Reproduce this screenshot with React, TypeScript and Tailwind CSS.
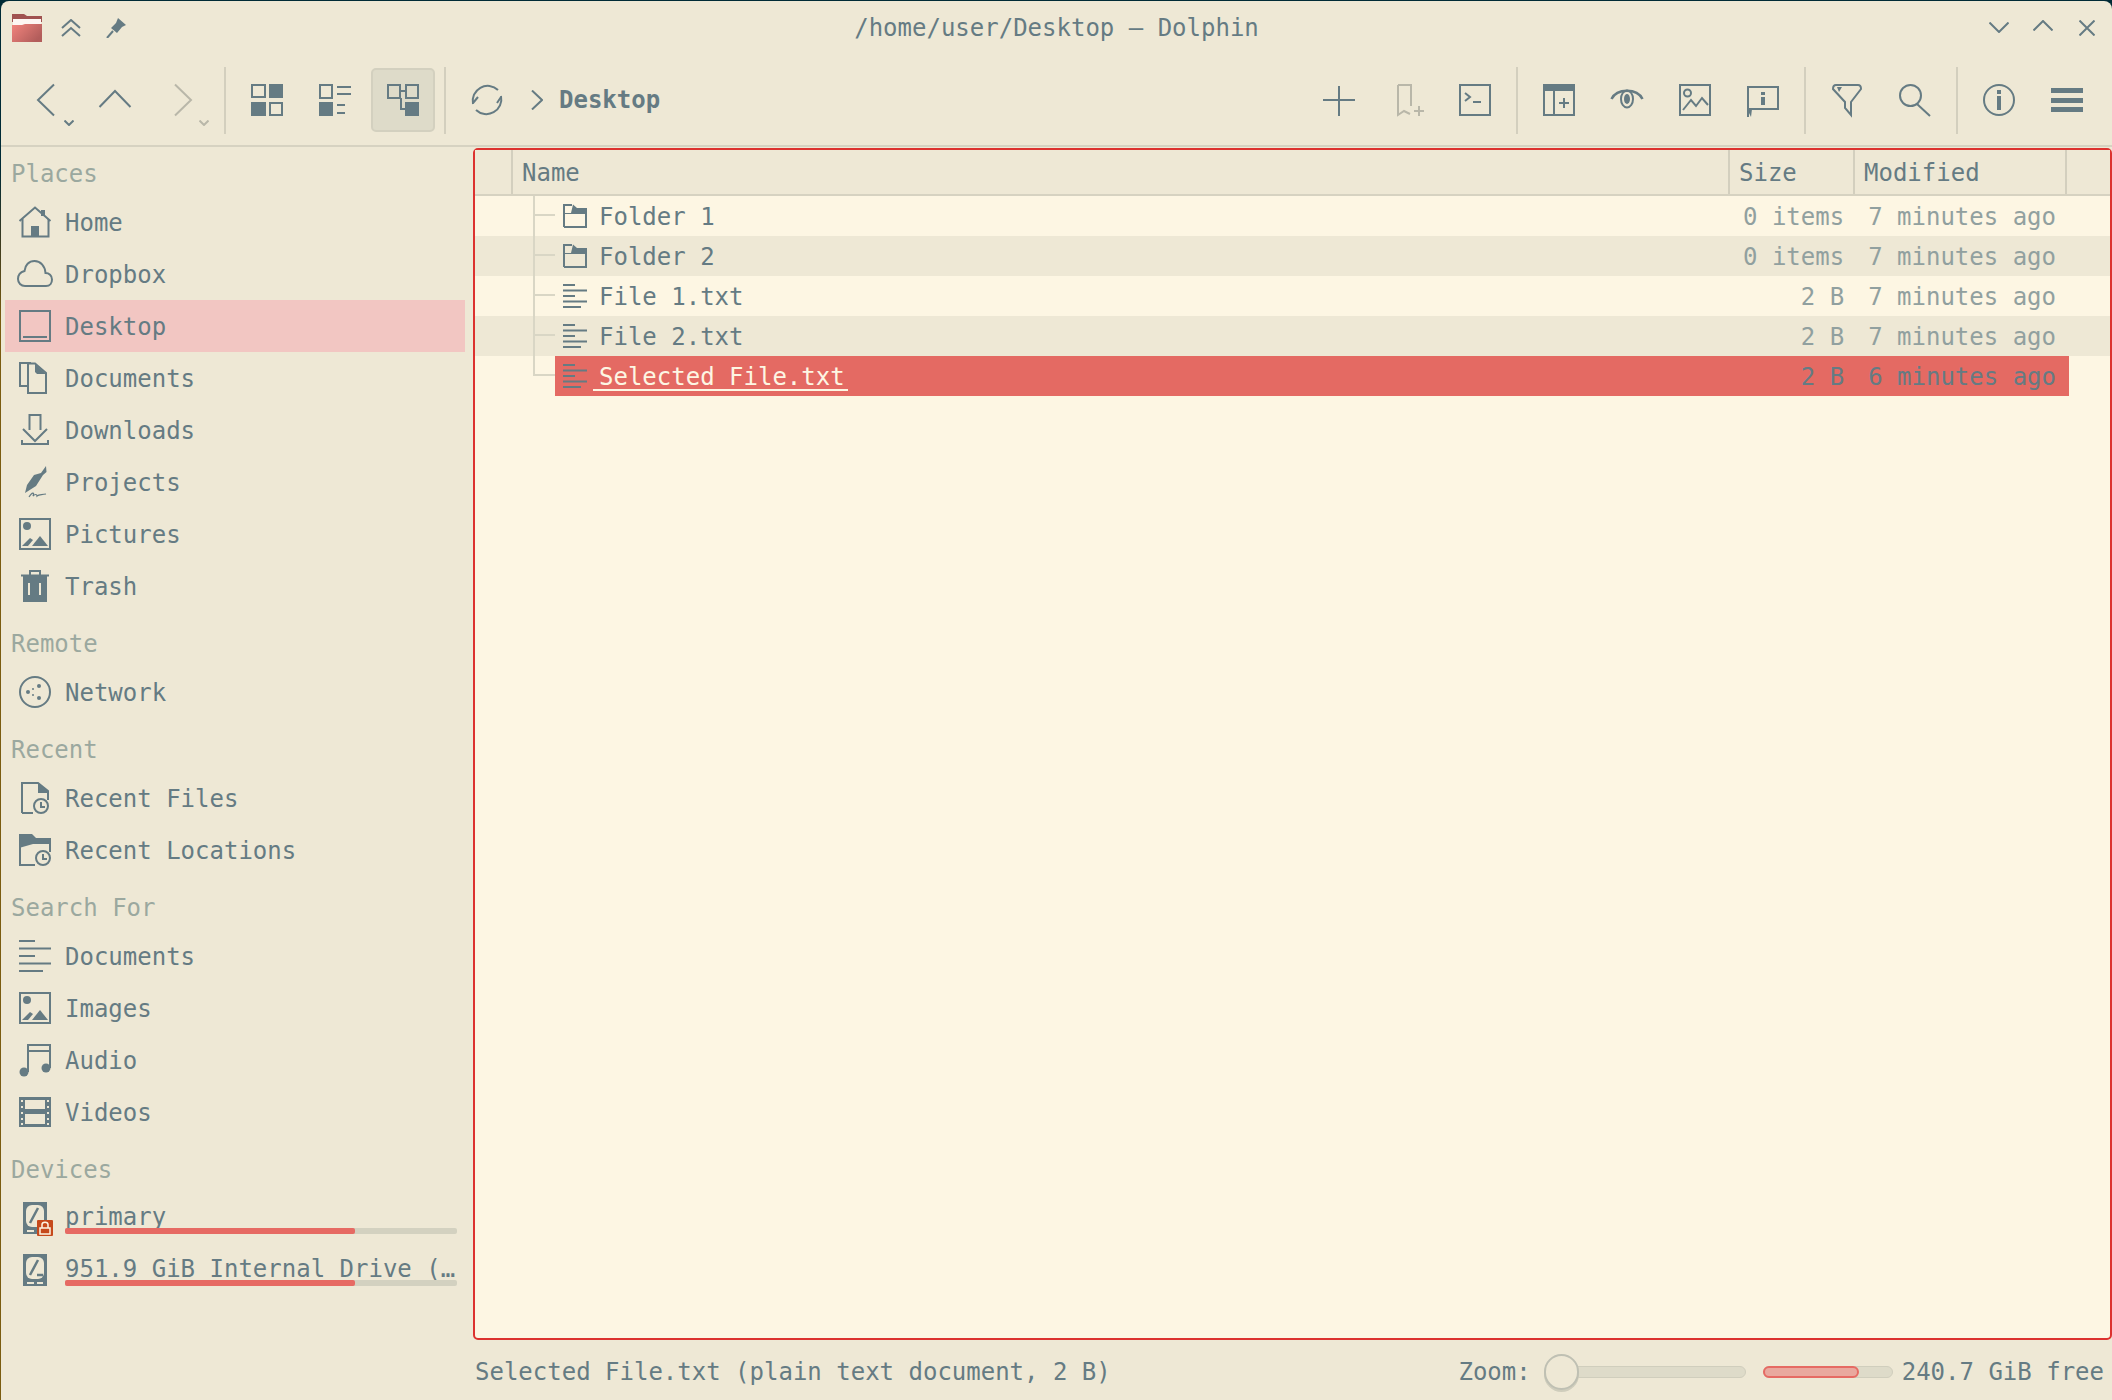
import type { ReactNode } from "react";

const INK = "#657b83";
const DIM = "#b9b7a9";
const BG = "#eee8d5";

function Ic({ size = 32, color = INK, sw = 2, children }: { size?: number; color?: string; sw?: number; children: ReactNode }) {
  return (
    <svg width={size} height={size} viewBox={`0 0 ${size} ${size}`} fill="none" stroke={color} strokeWidth={sw} className="shrink-0 overflow-visible">
      {children}
    </svg>
  );
}

const Fill = { fill: INK, stroke: "none" };

const Home = () => (
  <Ic>
    <path d="M0.5 15 L16 1.5 L31.5 15" />
    <path d="M3.5 13 V30.5 H29.5 V13" />
    <rect x="22" y="4" width="4" height="6" {...Fill} />
    <rect x="12" y="20" width="8" height="11" {...Fill} />
  </Ic>
);
const Cloud = () => (
  <Ic>
    <path d="M6 28 H27 C31 28 33 25 33 21.5 C33 17.5 30 15 26.5 15 C26 8 21.5 3 15.5 3 C10 3 6 7 5.5 13 C2 14 -1 17 -1 21 C-1 25 2 28 6 28 Z" />
  </Ic>
);
const DesktopIc = () => (
  <Ic>
    <rect x="1" y="1" width="30" height="30" />
    <path d="M4 27 H28" />
  </Ic>
);
const Docs = () => (
  <Ic>
    <path d="M8 24 H1 V1 H12" />
    <path d="M9 1.5 H16 L27 11 V31 H9 Z" />
    <path d="M16 2 L27 12 H18 L16 10 Z" {...Fill} />
  </Ic>
);
const Download = () => (
  <Ic>
    <path d="M10.5 16 V1 H21.5 V16" />
    <path d="M4 15 L16 27 L28 15" />
    <path d="M3 26 V30 H29 V26" />
  </Ic>
);
const Pen = () => (
  <Ic>
    <path d="M27 0 L27.5 6 L24 9 L17 20 L6 27 L8 19 L15 9 L22 7 Z" {...Fill} />
    <path d="M10 31 C13 26 16 26 14 30 C16 28 18 28 18 30 C20 28 22 29 27 28" strokeWidth="1.2" />
  </Ic>
);
const Picture = () => (
  <Ic>
    <rect x="1" y="1" width="30" height="30" />
    <circle cx="8" cy="8" r="4" {...Fill} />
    <path d="M21 18 L29 28 H13 Z" {...Fill} />
    <path d="M3 28 L11 20 L14 22 L9 28 Z" {...Fill} />
  </Ic>
);
const Trash = () => (
  <Ic>
    <path d="M2 5.5 H30" />
    <path d="M11 5 V1 H21 V5" />
    <rect x="4" y="6" width="24" height="26" {...Fill} />
    <rect x="9" y="13" width="2" height="12" fill={BG} stroke="none" />
    <rect x="20" y="13" width="2" height="12" fill={BG} stroke="none" />
  </Ic>
);
const Net = () => (
  <Ic>
    <circle cx="16" cy="16" r="15" />
    <circle cx="9" cy="16" r="2" {...Fill} />
    <circle cx="20" cy="10" r="2" {...Fill} />
    <circle cx="20" cy="22" r="2" {...Fill} />
    <circle cx="14" cy="13" r="1" {...Fill} />
    <circle cx="14" cy="19" r="1" {...Fill} />
  </Ic>
);
const Clock = ({ x, y }: { x: number; y: number }) => (
  <g>
    <circle cx={x} cy={y} r="7" fill={BG} />
    <path d={`M${x} ${y - 4} V${y + 1} H${x + 4}`} />
  </g>
);
const RecentFile = () => (
  <Ic>
    <path d="M3 31 V1 H19 L29 9 V18" />
    <path d="M3 31 H14" />
    <path d="M19 1 L29 9 V11 H19 Z" {...Fill} />
    <Clock x={22} y={24} />
  </Ic>
);
const RecentLoc = () => (
  <Ic>
    <path d="M0 0 H13 L17 4 H32 V10 H14 L0 14 Z" {...Fill} />
    <path d="M1 12 V31 H16" />
    <path d="M31 10 V18" />
    <Clock x={24} y={24} />
  </Ic>
);
const Lines = () => (
  <Ic>
    <path d="M0 1 H16 M0 8.5 H32 M0 16 H16 M0 23.5 H32 M0 31 H24" />
  </Ic>
);
const Music = () => (
  <Ic>
    <path d="M9 28 V1 H31 V24 M9 7 H31" />
    <circle cx="5" cy="28" r="4.5" {...Fill} />
    <circle cx="27" cy="24" r="4.5" {...Fill} />
  </Ic>
);
const Film = () => (
  <Ic>
    <path fillRule="evenodd" d="M0 1 H32 V31 H0 Z M6 4 V13 H26 V4 Z M6 18 V28 H26 V18 Z" {...Fill} />
    {[4, 10, 16, 22, 27].map((y) => (
      <g key={y}>
        <rect x="2" y={y} width="2" height="2" fill={BG} stroke="none" />
        <rect x="28" y={y} width="2" height="2" fill={BG} stroke="none" />
      </g>
    ))}
  </Ic>
);
const Drive = ({ locked }: { locked?: boolean }) => (
  <Ic>
    <rect x="4" y="0" width="24" height="32" {...Fill} />
    <rect x="7" y="3" width="18" height="22" rx="6" fill={BG} stroke="none" />
    <path d="M19 6 L11 21 M18 21 H24" stroke={INK} strokeWidth="2.5" />
    <rect x="8" y="28" width="7" height="2" fill={BG} stroke="none" />
    <rect x="18" y="28" width="6" height="2" fill={BG} stroke="none" />
    {locked && (
      <g>
        <rect x="18" y="18" width="16" height="16" rx="1" fill="#c64a1c" stroke="none" />
        <rect x="21" y="26" width="10" height="6" stroke="#fdf6e3" strokeWidth="1.5" />
        <path d="M23 26 V22.5 C23 19.5 29 19.5 29 22.5 V26" stroke="#fdf6e3" strokeWidth="1.5" />
      </g>
    )}
  </Ic>
);

const SmallFolder = () => (
  <Ic size={24}>
    <path d="M1 23 H23 V5 M1 23 V1 H9" />
    <path d="M10 0.5 L14 4 H24 V10 H1 V9 H8 Z" {...Fill} />
  </Ic>
);
const SmallFile = () => (
  <Ic size={24}>
    <path d="M0 1 H12 M0 6.5 H24 M0 12 H12 M0 17.5 H24 M0 23 H18" />
  </Ic>
);

const AppFolder = () => (
  <svg width="30" height="28" viewBox="0 0 30 28" className="shrink-0">
    <defs>
      <linearGradient id="appf" x1="0" y1="0" x2="1" y2="0.6">
        <stop offset="0" stopColor="#f2847d" />
        <stop offset="1" stopColor="#b25d5b" />
      </linearGradient>
    </defs>
    <path d="M0 0 H12 L15 2 H30 V8 H0 Z" fill="#a05250" />
    <rect x="1" y="5" width="28" height="6" fill="#fdf6f2" />
    <path d="M0 11 H10 L13 10 H30 V28 H0 Z" fill="url(#appf)" />
  </svg>
);

const Btn = ({ active, children, badge }: { active?: boolean; children: ReactNode; badge?: ReactNode }) => (
  <div
    className={`relative flex h-[64px] w-[64px] items-center justify-center rounded-[5px] border-2 ${
      active ? "border-[#d3d0bf] bg-[#dedbc9]" : "border-transparent"
    }`}
  >
    {children}
    {badge}
  </div>
);

const Sep = () => <div className="mx-[9px] h-[67px] w-[2px] bg-[#d3cfbe]" />;

const Caret = ({ color, left }: { color: string; left: string }) => (
  <svg width="10" height="6" viewBox="0 0 10 6" fill="none" stroke={color} strokeWidth="2" className={`absolute top-[50px] ${left}`}>
    <path d="M0.5 0.5 L5 5 L9.5 0.5" />
  </svg>
);

const places = [
  { t: "Home", i: <Home /> },
  { t: "Dropbox", i: <Cloud /> },
  { t: "Desktop", i: <DesktopIc />, on: true },
  { t: "Documents", i: <Docs /> },
  { t: "Downloads", i: <Download /> },
  { t: "Projects", i: <Pen /> },
  { t: "Pictures", i: <Picture /> },
  { t: "Trash", i: <Trash /> },
];
const sections = [
  { h: "Places", items: places },
  { h: "Remote", items: [{ t: "Network", i: <Net /> }] },
  {
    h: "Recent",
    items: [
      { t: "Recent Files", i: <RecentFile /> },
      { t: "Recent Locations", i: <RecentLoc /> },
    ],
  },
  {
    h: "Search For",
    items: [
      { t: "Documents", i: <Lines /> },
      { t: "Images", i: <Picture /> },
      { t: "Audio", i: <Music /> },
      { t: "Videos", i: <Film /> },
    ],
  },
];

const rows = [
  { n: "Folder 1", s: "0 items", m: "7 minutes ago", dir: true },
  { n: "Folder 2", s: "0 items", m: "7 minutes ago", dir: true },
  { n: "File 1.txt", s: "2 B", m: "7 minutes ago" },
  { n: "File 2.txt", s: "2 B", m: "7 minutes ago" },
  { n: "Selected File.txt", s: "2 B", m: "6 minutes ago", sel: true },
];

function Section({ h, items }: { h: string; items: { t: string; i: ReactNode; on?: boolean }[] }) {
  return (
    <div className="mb-[10px]">
      <div className="flex h-[44px] items-center pl-[10px] text-[#9ba89f]">{h}</div>
      {items.map((it) => (
        <div key={it.t} className={`ml-[4px] flex h-[52px] w-[460px] items-center gap-[14px] pl-[14px] ${it.on ? "bg-[#f2c6c2]" : ""}`}>
          {it.i}
          <span className="pt-[2px]">{it.t}</span>
        </div>
      ))}
    </div>
  );
}

function Device({ label, locked }: { label: string; locked?: boolean }) {
  return (
    <div className="ml-[4px] flex h-[52px] w-[460px] items-center gap-[14px] pl-[14px]">
      <Drive locked={locked} />
      <div className="flex w-[392px] flex-col">
        <span className="h-[30px] whitespace-nowrap leading-[30px]">{label}</span>
        <div className="-mt-[4px] flex h-[6px] rounded-[2px] bg-[#d3d1c0]">
          <div className="h-full w-[290px] rounded-[2px] bg-[#e66a63]" />
        </div>
      </div>
    </div>
  );
}

function HeadCell({ className, children }: { className: string; children?: ReactNode }) {
  return <div className={`flex h-full items-center border-r-2 border-[#d3cfbe] pt-[2px] ${className}`}>{children}</div>;
}

export default function App() {
  return (
    <div className="h-[1400px] w-[2112px] overflow-hidden bg-[linear-gradient(180deg,#002b36_0px,#002b36_170px,#3a3a20_240px,#7a5c10_320px,#7a5c10_1400px)] pl-[1px] pt-[1px] font-['DejaVu_Sans_Mono',monospace] text-[24px] text-[#657b83]">
      <div className="flex h-[1399px] w-[2111px] flex-col rounded-t-[8px] bg-[#eee8d5]">
        {/* title bar */}
        <div className="flex h-[53px] shrink-0 items-center">
          <div className="flex flex-1 items-center pl-[11px]">
            <AppFolder />
            <svg width="20" height="18" viewBox="0 0 20 18" fill="none" stroke={INK} strokeWidth="2" className="ml-[19px]">
              <path d="M1 9 L10 1 L19 9 M1 17 L10 9 L19 17" />
            </svg>
            <svg width="20" height="20" viewBox="0 0 20 20" className="ml-[25px]">
              <path d="M12 0 L20 7 L16 9 L11 15 L5 10 L10 5 Z" fill={INK} />
              <path d="M7 13 L1 20" stroke={INK} strokeWidth="2" />
            </svg>
          </div>
          <span className="ml-[6px]">/home/user/Desktop — Dolphin</span>
          <div className="flex flex-1 items-center justify-end gap-[24px] pr-[17px]">
            <svg width="20" height="11" viewBox="0 0 20 11" fill="none" stroke={INK} strokeWidth="2">
              <path d="M0.5 0.5 L10 10 L19.5 0.5" />
            </svg>
            <svg width="20" height="11" viewBox="0 0 20 11" fill="none" stroke={INK} strokeWidth="2" className="-mt-[4px]">
              <path d="M0.5 10.5 L10 1 L19.5 10.5" />
            </svg>
            <svg width="16" height="16" viewBox="0 0 16 16" fill="none" stroke={INK} strokeWidth="2" className="ml-[2px]">
              <path d="M0.5 0.5 L15.5 15.5 M15.5 0.5 L0.5 15.5" />
            </svg>
          </div>
        </div>

        {/* toolbar */}
        <div className="flex h-[93px] shrink-0 items-center border-b-2 border-[#d6d2c1] pl-[14px] pr-[13px] pt-[1px]">
          <div className="flex items-center gap-[4px]">
            <Btn badge={<Caret color={INK} left="left-[47px]" />}>
              <Ic><path d="M23 0.5 L7 16 L23 31.5" /></Ic>
            </Btn>
            <Btn>
              <Ic><path d="M0.5 23 L16 7 L31.5 23" /></Ic>
            </Btn>
            <Btn badge={<Caret color={DIM} left="left-[46px]" />}>
              <Ic color={DIM}><path d="M8 0.5 L24 16 L8 31.5" /></Ic>
            </Btn>
          </div>
          <Sep />
          <div className="flex items-center gap-[4px]">
            <Btn>
              <Ic>
                <rect x="1" y="1" width="13" height="12" />
                <rect x="18" y="0" width="14" height="14" {...Fill} />
                <rect x="0" y="18" width="15" height="14" {...Fill} />
                <rect x="19" y="19" width="12" height="12" />
              </Ic>
            </Btn>
            <Btn>
              <Ic>
                <rect x="1" y="1" width="12" height="13" />
                <rect x="0" y="18" width="14" height="14" {...Fill} />
                <path d="M18 3 H32 M18 10 H32 M18 21 H26 M18 29 H26" />
              </Ic>
            </Btn>
            <Btn active>
              <Ic>
                <rect x="1" y="1" width="12" height="13" />
                <rect x="19" y="1" width="12" height="13" />
                <path d="M13 7 H19 M14 14 V25 H19" />
                <rect x="18" y="18" width="14" height="14" {...Fill} />
              </Ic>
            </Btn>
          </div>
          <Sep />
          <Btn>
            <Ic>
              <path d="M2 20 A15 15 0 0 1 27 6" />
              <path d="M30 12 A15 15 0 0 1 5 26" />
              <path d="M2 19 L7 13 M30 13 L26 19" />
            </Ic>
          </Btn>
          <svg width="12" height="20" viewBox="0 0 12 20" fill="none" stroke={INK} strokeWidth="2" className="ml-[12px]">
            <path d="M1 0.5 L11 10 L1 19.5" />
          </svg>
          <span className="ml-[16px] font-bold">Desktop</span>

          <div className="ml-auto flex items-center gap-[4px]">
            <Btn>
              <Ic><path d="M16 2 V32 M0 16 H32" /></Ic>
            </Btn>
            <Btn>
              <Ic color={DIM}>
                <path d="M7 1 H20 V22 M7 1 V31 L13 27 L19 30" />
                <path d="M28 22 V32 M23 27 H33" />
              </Ic>
            </Btn>
            <Btn>
              <Ic>
                <rect x="1" y="1" width="30" height="30" />
                <path d="M6 9 L11 13 L6 17 M14 18 H22" />
              </Ic>
            </Btn>
          </div>
          <Sep />
          <div className="flex items-center gap-[4px]">
            <Btn>
              <Ic>
                <rect x="1" y="1" width="30" height="30" />
                <rect x="0" y="0" width="32" height="7" {...Fill} />
                <path d="M11 6 V31 M16 19 H26 M21 14 V24" />
              </Ic>
            </Btn>
            <Btn>
              <Ic>
                <path d="M0.5 15 C6 4 26 4 31.5 15" strokeWidth="2.5" />
                <ellipse cx="16" cy="15" rx="6" ry="8.5" />
                <ellipse cx="16" cy="15" rx="3" ry="5" {...Fill} />
              </Ic>
            </Btn>
            <Btn>
              <Ic>
                <rect x="1" y="1" width="30" height="30" />
                <circle cx="8.5" cy="9" r="3.5" />
                <path d="M4 26 L12 16 L17 22 L23 14 L29 21" />
              </Ic>
            </Btn>
            <Btn>
              <Ic>
                <path d="M1 33 V3 H31 V25 H1" />
                <path d="M0 25 H5 L4 33 Z" {...Fill} />
                <rect x="14" y="8" width="4" height="3" {...Fill} />
                <rect x="14" y="13" width="4" height="8" {...Fill} />
              </Ic>
            </Btn>
          </div>
          <Sep />
          <div className="flex items-center gap-[4px]">
            <Btn>
              <Ic>
                <path d="M5 1 H27 Q30 1 30 5 L20 18 V31 L14 24 V18 L2 5 Q2 1 5 1 Z" />
                <path d="M6 3 H11 L8 8 Z" {...Fill} />
              </Ic>
            </Btn>
            <Btn>
              <Ic>
                <ellipse cx="11.5" cy="11.5" rx="10.5" ry="10.5" />
                <path d="M18 20 L31 32" />
              </Ic>
            </Btn>
          </div>
          <Sep />
          <div className="flex items-center gap-[4px]">
            <Btn>
              <Ic>
                <circle cx="16" cy="16" r="15" />
                <rect x="14" y="6" width="4" height="4" {...Fill} />
                <rect x="14" y="12" width="4" height="14" {...Fill} />
              </Ic>
            </Btn>
            <Btn>
              <Ic>
                <rect x="0" y="4" width="32" height="5" {...Fill} />
                <rect x="0" y="14" width="32" height="5" {...Fill} />
                <rect x="0" y="23" width="32" height="5" {...Fill} />
              </Ic>
            </Btn>
          </div>
        </div>

        {/* body */}
        <div className="flex min-h-0 flex-1">
          <aside className="w-[472px] shrink-0 pt-[5px]">
            {sections.map((s) => (
              <Section key={s.h} h={s.h} items={s.items} />
            ))}
            <div className="flex h-[44px] items-center pl-[10px] text-[#9ba89f]">Devices</div>
            <Device label="primary" locked />
            <Device label="951.9 GiB Internal Drive (…" />
          </aside>

          <div className="flex min-w-0 flex-1 flex-col pt-[1px]">
            <div className="flex h-[1192px] flex-col rounded-[5px] border-2 border-[#dc322f] bg-[#fdf6e3]">
              <div className="flex h-[46px] shrink-0 border-b-2 border-[#d6d2c1] bg-[#eee8d5]">
                <HeadCell className="w-[38px]" />
                <HeadCell className="w-[1217px] pl-[9px]">Name</HeadCell>
                <HeadCell className="w-[125px] pl-[9px]">Size</HeadCell>
                <HeadCell className="w-[212px] pl-[9px]">Modified</HeadCell>
              </div>
              {rows.map((r, idx) => (
                <div key={r.n} className={`flex h-[40px] shrink-0 ${idx % 2 === 1 ? "bg-[#eee8d5]" : ""}`}>
                  <div className="w-[58px] shrink-0" />
                  <div className={`w-[22px] shrink-0 border-l-2 border-[#d9d6c5] ${r.sel ? "h-[20px]" : ""}`}>
                    <div className="h-[20px] border-b-2 border-[#d9d6c5]" />
                  </div>
                  <div className={`flex w-[1514px] items-center ${r.sel ? "bg-[#e46a63]" : ""}`}>
                    <div className="ml-[8px]">{r.dir ? <SmallFolder /> : <SmallFile />}</div>
                    <span
                      className={`ml-[6px] whitespace-nowrap pl-[6px] pr-[3px] ${
                        r.sel ? "border-b-2 border-[#fdf6e3] pt-[4px] leading-[24px] text-[#fdf6e3]" : "pt-[2px]"
                      }`}
                    >
                      {r.n}
                    </span>
                    <span className={`ml-auto whitespace-nowrap pt-[2px] ${r.sel ? "" : "text-[#91a09f]"}`}>{r.s}</span>
                    <span className={`ml-[24px] mr-[13px] whitespace-nowrap pt-[2px] ${r.sel ? "" : "text-[#91a09f]"}`}>{r.m}</span>
                  </div>
                </div>
              ))}
            </div>

            <div className="flex flex-1 items-center pl-[2px] pr-[8px] pt-[4px]">
              <span className="whitespace-nowrap">Selected File.txt (plain text document, 2 B)</span>
              <span className="ml-auto">Zoom:</span>
              <div className="ml-[13px] flex items-center">
                <div className="z-10 h-[36px] w-[35px] rounded-full border-2 border-[#bfc0b3] bg-[#eee8d5] shadow-[0_2px_0_#cfcdbc]" />
                <div className="-ml-[2px] h-[12px] w-[169px] rounded-r-full border border-[#d0cebd] bg-[#dedbc9]" />
              </div>
              <div className="ml-[17px] h-[12px] w-[130px] rounded-full border border-[#d0cebd] bg-[#dedbc9]">
                <div className="-m-px h-[12px] w-[96px] rounded-full border-2 border-[#e66a63] bg-[#e9a89e]" />
              </div>
              <span className="ml-[9px] whitespace-nowrap">240.7 GiB free</span>
            </div>
          </div>
        </div>
      </div>
    </div>
  );
}
